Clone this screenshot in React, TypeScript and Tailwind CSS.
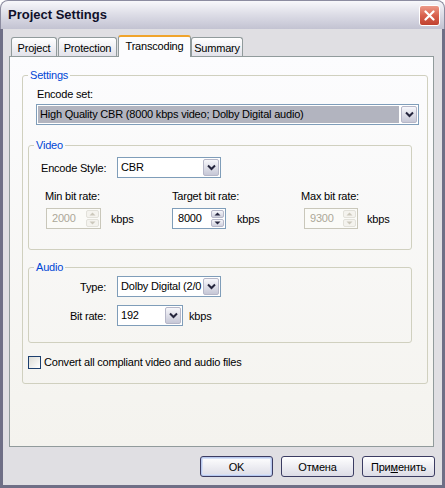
import React from 'react';

const Chevron: React.FC = () => (
  <svg width="9" height="7" viewBox="0 0 9 7">
    <path d="M1 1.5 L4.5 5 L8 1.5" fill="none" stroke="#25253d" strokeWidth="2" />
  </svg>
);

const DropButton: React.FC = () => (
  <div className="flex w-[16px] shrink-0 items-center justify-center rounded-[2px] border border-[#b6b7c8] bg-linear-to-b from-[#f7f7fb] to-[#c6c7d6]">
    <Chevron />
  </div>
);

const Combo: React.FC<{ value: string; className: string; selected?: boolean }> = ({ value, className, selected }) => (
  <div className={`flex h-[21px] border border-[#7f9db9] bg-white p-px ${className}`}>
    <div
      className={`flex-1 overflow-hidden whitespace-nowrap pl-[2px] leading-[17px] ${selected ? 'mr-[2px] bg-[#b2b4bf]' : ''}`}
    >
      {value}
    </div>
    <DropButton />
  </div>
);

const SpinBtn: React.FC<{ up?: boolean; disabled?: boolean }> = ({ up, disabled }) => (
  <div
    className={`flex flex-1 items-center justify-center rounded-[2px] border ${
      disabled ? 'border-[#e2e1da] bg-[#f4f3ee]' : 'border-[#b6b7c8] bg-linear-to-b from-[#f7f7fb] to-[#cfd0dd]'
    }`}
  >
    <svg width="7" height="4" viewBox="0 0 7 4">
      <path d={up ? 'M0.5 3.5 L3.5 0.5 L6.5 3.5 Z' : 'M0.5 0.5 L3.5 3.5 L6.5 0.5 Z'} fill={disabled ? '#cbc8bb' : '#25253d'} />
    </svg>
  </div>
);

const Spin: React.FC<{ value: string; disabled?: boolean; className: string }> = ({ value, disabled, className }) => (
  <div
    className={`flex h-[21px] border p-px ${
      disabled ? 'border-[#c9c7ba] bg-[#fbfbf8] text-[#aca899]' : 'border-[#7f9db9] bg-white'
    } ${className}`}
  >
    <div className="flex-1 pl-[4px] leading-[17px]">{value}</div>
    <div className="flex w-[13px] flex-col gap-px">
      <SpinBtn up disabled={disabled} />
      <SpinBtn disabled={disabled} />
    </div>
  </div>
);

const Group: React.FC<{ title: string; className: string; legendClass: string; children: React.ReactNode }> = ({
  title,
  className,
  legendClass,
  children,
}) => (
  <fieldset className={`rounded-[3px] border border-[#d0d0bf] ${className}`}>
    <legend className={`px-[2px] leading-[14px] text-[#0046d5] ${legendClass}`}>{title}</legend>
    {children}
  </fieldset>
);

const RateColumn: React.FC<{ label: string; value: string; disabled?: boolean; className: string; spinClass: string; kbpsClass: string }> = ({
  label,
  value,
  disabled,
  className,
  spinClass,
  kbpsClass,
}) => (
  <div className={className}>
    <div className="leading-[14px]">{label}</div>
    <div className="mt-[5px] flex items-center">
      <Spin value={value} disabled={disabled} className={spinClass} />
      <span className={kbpsClass}>kbps</span>
    </div>
  </div>
);

const Tab: React.FC<{ label: string; className: string; active?: boolean }> = ({ label, className, active }) =>
  active ? (
    <div
      className={`relative z-10 -mb-px h-[22px] rounded-t-[3px] border-x border-t-[2px] border-x-[#919b9c] border-t-[#f0a42c] bg-[#fcfcfe] pt-[2px] text-center leading-[14px] ${className}`}
    >
      {label}
    </div>
  ) : (
    <div
      className={`h-[19px] rounded-t-[3px] border-x border-t border-[#919b9c] bg-linear-to-b from-white to-[#e2e2ea] pt-[3px] text-center leading-[14px] ${className}`}
    >
      {label}
    </div>
  );

const Button: React.FC<{ children: React.ReactNode; primary?: boolean }> = ({ children, primary }) => (
  <div
    className={`flex h-[21px] w-[73px] items-center justify-center rounded-[3px] border border-[#3b3c62] bg-linear-to-b from-white to-[#dcdce6] ${
      primary ? 'shadow-[inset_0_0_0_1px_#b8c8ee,inset_0_0_0_2px_#d6e0f6]' : ''
    }`}
  >
    {children}
  </div>
);

export default function App() {
  return (
    <div className="flex h-[488px] w-[445px] flex-col bg-white font-['Liberation_Sans',Arial,sans-serif] text-[11px] leading-[14px] tracking-[-0.2px] text-black">
      {/* title bar */}
      <div className="flex h-[29px] shrink-0 items-center rounded-t-[8px] border-x border-t border-[#8c8ca0] bg-linear-to-b from-[#f8f8fb] via-[#dcdce6] to-[#c3c3d2] pl-[7px]">
        <span className="text-[13px] font-bold tracking-[0px] text-[#10102a]">Project Settings</span>
        <div className="ml-auto mr-[4px] flex h-[21px] w-[21px] items-center justify-center rounded-[3px] border border-white bg-linear-to-b from-[#ec9a89] via-[#d8604d] to-[#c0412f]">
          <svg width="11" height="11" viewBox="0 0 11 11">
            <path d="M1.5 1.5 L9.5 9.5 M9.5 1.5 L1.5 9.5" stroke="white" strokeWidth="2.2" strokeLinecap="round" />
          </svg>
        </div>
      </div>

      {/* body */}
      <div className="flex flex-1 flex-col border-x-[3px] border-b-[3px] border-[#6f6f86] bg-[#e0dfe3]">
        <div className="ml-[8px] mt-[6px] flex h-[21px] items-end">
          <Tab label="Project" className="w-[46px]" />
          <Tab label="Protection" className="ml-px w-[59px]" />
          <Tab label="Transcoding" className="ml-px w-[73px]" active />
          <Tab label="Summary" className="w-[52px]" />
        </div>

        <div className="ml-[6px] h-[391px] w-[425px] border border-[#919b9c] bg-linear-to-b from-[#fcfcfe] to-[#f4f3ee]">
          <Group title="Settings" className="ml-[12px] mt-[11px] w-[406px] pb-[14px]" legendClass="ml-[5px]">
            <div className="ml-[14px] mt-[5px]">Encode set:</div>
            <Combo
              value="High Quality CBR (8000 kbps video; Dolby Digital audio)"
              className="ml-[13px] mt-[3px] w-[383px]"
              selected
            />

            <Group title="Video" className="ml-[5px] mt-[13px] w-[384px] pb-[20px]" legendClass="ml-[5px]">
              <div className="mt-[5px] flex items-center">
                <span className="ml-[12px] w-[76px]">Encode Style:</span>
                <Combo value="CBR" className="w-[104px]" />
              </div>
              <div className="mt-[11px] flex">
                <RateColumn
                  label="Min bit rate:"
                  value="2000"
                  disabled
                  className="ml-[16px] w-[127px]"
                  spinClass="ml-px w-[55px]"
                  kbpsClass="ml-[10px]"
                />
                <RateColumn
                  label="Target bit rate:"
                  value="8000"
                  className="w-[129px]"
                  spinClass="w-[54px]"
                  kbpsClass="ml-[11px]"
                />
                <RateColumn
                  label="Max bit rate:"
                  value="9300"
                  disabled
                  className="w-[100px]"
                  spinClass="ml-[3px] w-[54px]"
                  kbpsClass="ml-[9px]"
                />
              </div>
            </Group>

            <Group title="Audio" className="ml-[5px] mt-[10px] w-[384px] pb-[16px]" legendClass="ml-[5px]">
              <div className="mt-[2px] flex items-center">
                <span className="w-[77px] text-right">Type:</span>
                <Combo value="Dolby Digital (2/0" className="ml-[11px] w-[104px]" />
              </div>
              <div className="mt-[8px] flex items-center">
                <span className="w-[77px] text-right">Bit rate:</span>
                <Combo value="192" className="ml-[11px] w-[66px]" />
                <span className="ml-[6px]">kbps</span>
              </div>
            </Group>

            <div className="ml-[5px] mt-[12px] flex items-center">
              <div className="h-[13px] w-[13px] border border-[#1c3f6e] bg-linear-to-br from-[#dcdcd6] to-white" />
              <span className="ml-[3px]">Convert all compliant video and audio files</span>
            </div>
          </Group>
        </div>

        <div className="mr-[7px] mt-[9px] flex justify-end gap-[8px]">
          <Button primary>OK</Button>
          <Button>Отмена</Button>
          <Button>
            <span>
              При<span className="underline">м</span>енить
            </span>
          </Button>
        </div>
      </div>
    </div>
  );
}
